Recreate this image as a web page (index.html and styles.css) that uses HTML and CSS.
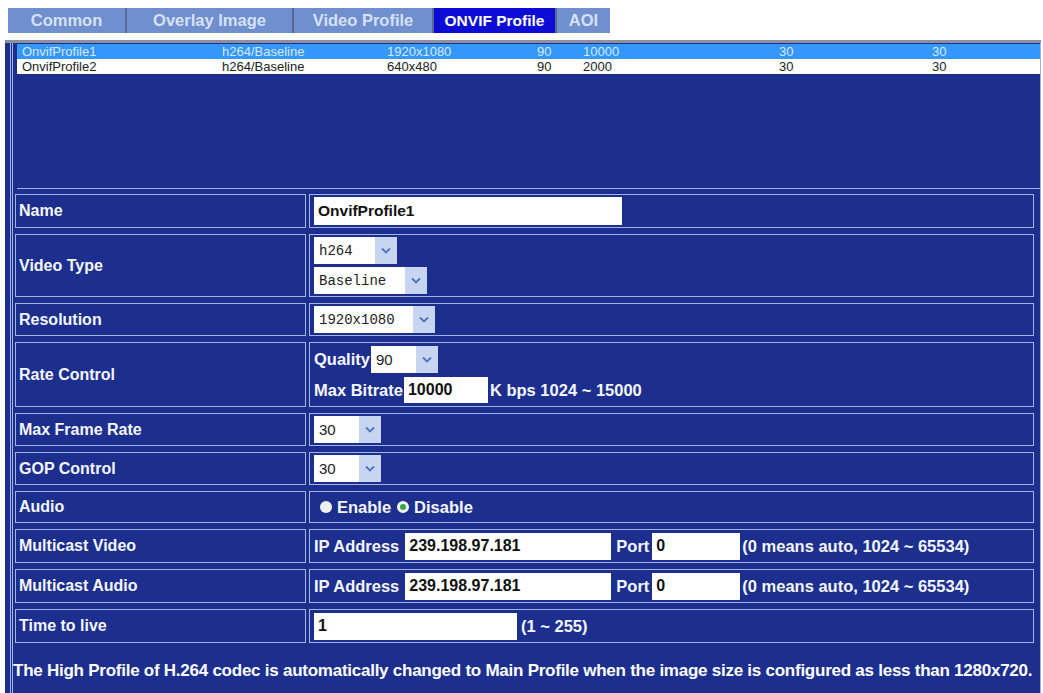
FILE: index.html
```html
<!DOCTYPE html>
<html>
  <head>
    <title>ONVIF Profile</title>
    <link rel="stylesheet" href="styles.css">
  </head>
  <body>
    <div class="abas">
      <div class="aba aba-common">Common</div>
      <div class="aba aba-overlay">Overlay Image</div>
      <div class="aba aba-video">Video Profile</div>
      <div class="aba aba-onvif ativa">ONVIF Profile</div>
      <div class="aba aba-aoi">AOI</div>
    </div>
    <div class="painel">
      <div class="moldura">
        <div class="lista">
          <div class="linha selecionada">
            <span>OnvifProfile1</span><span>h264/Baseline</span><span>1920x1080</span><span>90</span><span>10000</span><span>30</span><span>30</span>
          </div>
          <div class="linha">
            <span>OnvifProfile2</span><span>h264/Baseline</span><span>640x480</span><span>90</span><span>2000</span><span>30</span><span>30</span>
          </div>
        </div>
        <table class="form">
          <tr>
            <td class="rotulo">Name</td>
            <td class="valor"><input class="campo nome" value="OnvifProfile1"></td>
          </tr>
          <tr>
            <td class="rotulo">Video Type</td>
            <td class="valor">
              <div class="pilha">
                <div class="caixa mono w-h264"><span class="texto">h264</span><span class="seta"><svg width="10" height="7" viewBox="0 0 10 7"><path d="M1 1.5 L5 5.5 L9 1.5" fill="none" stroke="#4f73c4" stroke-width="1.8"/></svg></span></div>
                <div class="caixa mono w-base"><span class="texto">Baseline</span><span class="seta"><svg width="10" height="7" viewBox="0 0 10 7"><path d="M1 1.5 L5 5.5 L9 1.5" fill="none" stroke="#4f73c4" stroke-width="1.8"/></svg></span></div>
              </div>
            </td>
          </tr>
          <tr>
            <td class="rotulo">Resolution</td>
            <td class="valor"><div class="caixa mono w-res"><span class="texto">1920x1080</span><span class="seta"><svg width="10" height="7" viewBox="0 0 10 7"><path d="M1 1.5 L5 5.5 L9 1.5" fill="none" stroke="#4f73c4" stroke-width="1.8"/></svg></span></div></td>
          </tr>
          <tr>
            <td class="rotulo">Rate Control</td>
            <td class="valor">
              <div class="pilha">
                <div class="inline"><span class="txt">Quality</span><div class="caixa w-num"><span class="texto">90</span><span class="seta"><svg width="10" height="7" viewBox="0 0 10 7"><path d="M1 1.5 L5 5.5 L9 1.5" fill="none" stroke="#4f73c4" stroke-width="1.8"/></svg></span></div></div>
                <div class="inline"><span class="txt">Max Bitrate</span><input class="campo bitrate" value="10000"><span class="txt">K bps 1024 ~ 15000</span></div>
              </div>
            </td>
          </tr>
          <tr>
            <td class="rotulo">Max Frame Rate</td>
            <td class="valor"><div class="caixa w-num"><span class="texto">30</span><span class="seta"><svg width="10" height="7" viewBox="0 0 10 7"><path d="M1 1.5 L5 5.5 L9 1.5" fill="none" stroke="#4f73c4" stroke-width="1.8"/></svg></span></div></td>
          </tr>
          <tr>
            <td class="rotulo">GOP Control</td>
            <td class="valor"><div class="caixa w-num"><span class="texto">30</span><span class="seta"><svg width="10" height="7" viewBox="0 0 10 7"><path d="M1 1.5 L5 5.5 L9 1.5" fill="none" stroke="#4f73c4" stroke-width="1.8"/></svg></span></div></td>
          </tr>
          <tr>
            <td class="rotulo">Audio</td>
            <td class="valor">
              <div class="inline radios">
                <span class="radio"></span><span class="txt">Enable</span>
                <span class="radio marcado"></span><span class="txt">Disable</span>
              </div>
            </td>
          </tr>
          <tr>
            <td class="rotulo">Multicast Video</td>
            <td class="valor">
              <div class="inline"><span class="txt">IP Address</span><input class="campo ip" value="239.198.97.181"><span class="txt porta">Port</span><input class="campo port" value="0"><span class="txt">(0 means auto, 1024 ~ 65534)</span></div>
            </td>
          </tr>
          <tr>
            <td class="rotulo">Multicast Audio</td>
            <td class="valor">
              <div class="inline"><span class="txt">IP Address</span><input class="campo ip" value="239.198.97.181"><span class="txt porta">Port</span><input class="campo port" value="0"><span class="txt">(0 means auto, 1024 ~ 65534)</span></div>
            </td>
          </tr>
          <tr>
            <td class="rotulo">Time to live</td>
            <td class="valor">
              <div class="inline"><input class="campo ttl" value="1"><span class="txt">(1 ~ 255)</span></div>
            </td>
          </tr>
        </table>
        <p class="nota">The High Profile of H.264 codec is automatically changed to Main Profile when the image size is configured as less than 1280x720.</p>
      </div>
    </div>
  </body>
</html>
```

FILE: styles.css
```css
body{
  margin: 0;
  background-color: #fff;
  font-family: "Liberation Sans", Arial, sans-serif;
  overflow: hidden;
}
.abas{
  display: flex;
  margin: 8px 0 0 8px;
  height: 25px;
}
.aba{
  display: flex;
  align-items: center;
  justify-content: center;
  background-color: #6f8fce;
  color: #d6e1f6;
  font-size: 16.5px;
  font-weight: bold;
  border-right: 2px solid #56688f;
}
.aba.ativa{
  background-color: #0c0cd6;
  color: #fff;
  font-size: 15.5px;
}
.aba-common{ width: 117px; }
.aba-overlay{ width: 165px; }
.aba-video{ width: 138px; }
.aba-onvif{ width: 121px; }
.aba-aoi{ width: 53px; border-right: none; }

.painel{
  margin: 7px 0 0 5px;
  width: 1036px;
  height: 650px;
  background-color: #1d2f8e;
  border-top: 3px solid #8c90a0;
}
.moldura{
  margin-left: 5px;
  height: 100%;
  border-left: 3px double #a3b3e4;
  border-right: 1px solid #a3b3e4;
}
.lista{
  margin-left: 4px;
  padding-top: 1px;
  height: 144px;
  border-bottom: 1px solid #a3b3e4;
  font-size: 13px;
}
.linha{
  display: grid;
  grid-template-columns: 200px 165px 150px 46px 196px 153px 1fr;
  height: 15px;
  line-height: 15px;
  padding-left: 5px;
  background-color: #fff;
  color: #222;
}
.linha.selecionada{
  background-color: #3597fc;
  color: #d6e9ff;
}

.form{
  border-spacing: 3px 6px;
  margin: -1px 0 0 -1px;
  width: 1025px;
}
.form td{
  border: 1px solid #a3b3e4;
  padding: 2px 0;
  color: #f4f6ff;
  font-size: 16.5px;
  font-weight: bold;
}
.form td.rotulo{
  width: 286px;
  padding-left: 3px;
  font-size: 16px;
}
.form td.valor{
  padding-left: 4px;
}
.pilha{
  display: flex;
  flex-direction: column;
  gap: 3px;
}
.inline{
  display: flex;
  align-items: center;
  height: 28px;
}
.txt{
  white-space: nowrap;
}
.campo{
  height: 27px;
  box-sizing: border-box;
  border: none;
  outline: none;
  padding: 0 4px;
  background-color: #fff;
  color: #111;
  font-family: "Liberation Sans", Arial, sans-serif;
  font-size: 16px;
  font-weight: bold;
}
.nome{ width: 308px; height: 28px; font-size: 15.5px; }
.bitrate{ width: 84px; margin: 0 2px 0 1px; height: 26px; }
.ip{ width: 206px; margin: 0 5px 0 6px; }
.port{ width: 88px; margin: 0 2px 0 3px; }
.ttl{ width: 203px; margin-right: 4px; }

.caixa{
  display: flex;
  height: 27px;
  background-color: #fff;
  color: #222;
  font-weight: normal;
  font-size: 15px;
}
.caixa .texto{
  flex: 1;
  display: flex;
  align-items: center;
  padding-left: 5px;
}
.caixa .seta{
  width: 22px;
  display: flex;
  align-items: center;
  justify-content: center;
  background-color: #c7d5f1;
}
.mono{
  font-family: "Liberation Mono", "Courier New", monospace;
  font-size: 14px;
}
.w-h264{ width: 83px; }
.w-base{ width: 113px; }
.w-res{ width: 121px; }
.w-num{ width: 67px; }
.inline .w-num{ margin-left: 1px; }

.radios{
  height: 26px;
  padding-left: 6px;
}
.radio{
  width: 12px;
  height: 12px;
  border-radius: 50%;
  background-color: #f0f0f0;
  margin-right: 5px;
}
.radio.marcado{
  margin-left: 6px;
  width: 6px;
  height: 6px;
  border: 3px solid #f4f4f4;
  background-color: #2fa84a;
}

.nota{
  margin: 12px 0 0 0;
  color: #fff;
  font-size: 17px;
  font-weight: bold;
  letter-spacing: -0.25px;
  white-space: nowrap;
}
```
